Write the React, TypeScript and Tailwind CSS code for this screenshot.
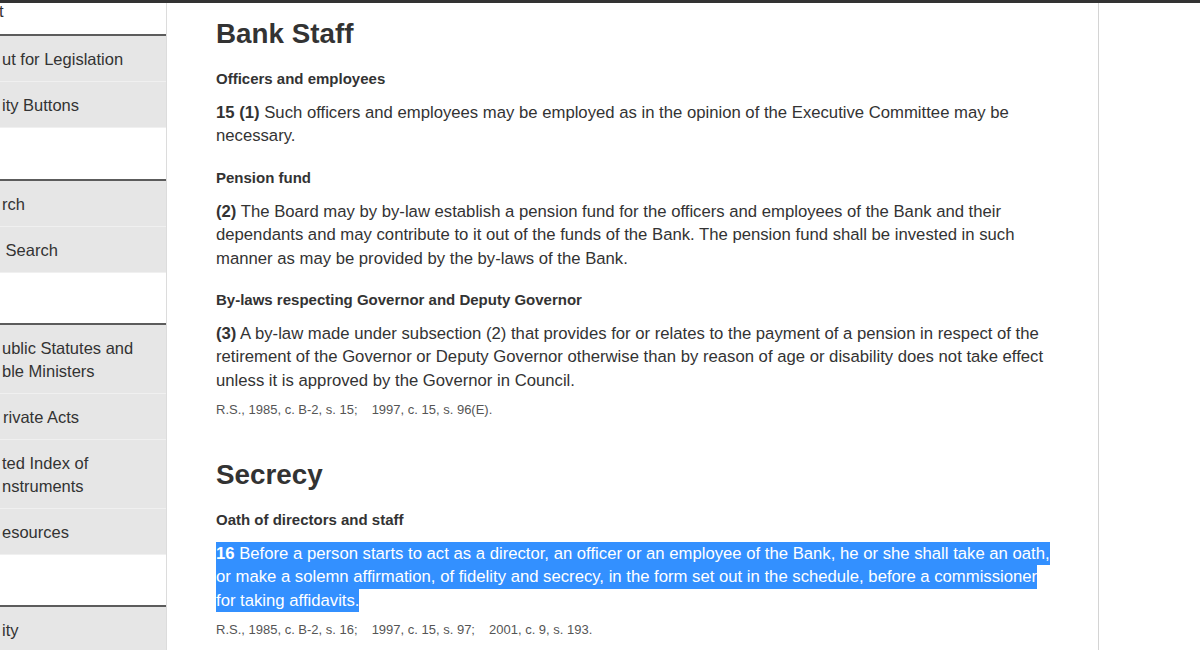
import React from "react";

type SideItem = { lines: string[]; pad?: string };

const groups: SideItem[][] = [
  [
    { lines: ["ut for Legislation"] },
    { lines: ["ity Buttons"] },
  ],
  [
    { lines: ["rch"] },
    { lines: ["\u00a0Search"], pad: "pl-[1px]" },
  ],
  [
    { lines: ["ublic Statutes and", "ble Ministers"] },
    { lines: ["rivate Acts"], pad: "pl-[3px]" },
    { lines: ["ted Index of", "nstruments"] },
    { lines: ["esources"] },
  ],
  [{ lines: ["ity"] }],
];

const gaps = ["h-[51px]", "h-[50px]", "h-[50px]"];

function Group({ items }: { items: SideItem[] }) {
  return (
    <div className="border-t-2 border-[#5c5c5c]">
      {items.map((it, i) => (
        <div
          key={i}
          className={`bg-[#e6e6e6] pt-[12px] pb-[10px] border-b border-[#f0f0f0] whitespace-nowrap ${it.pad ?? "pl-[2px]"}`}
        >
          {it.lines.map((l, j) => (
            <div key={j}>{l}</div>
          ))}
        </div>
      ))}
    </div>
  );
}

function Sidebar() {
  return (
    <aside className="w-[167px] shrink-0 border-r border-[#dcdcdc] overflow-hidden text-[16.5px] leading-[23px] text-[#333]">
      <div className="h-[31px] overflow-hidden">
        <div className="-mt-[3px] -ml-[1px]">t</div>
      </div>
      {groups.map((g, i) => (
        <React.Fragment key={i}>
          <Group items={g} />
          {i < gaps.length && <div className={gaps[i]} />}
        </React.Fragment>
      ))}
    </aside>
  );
}

function H2({ children, first }: { children: React.ReactNode; first?: boolean }) {
  return (
    <h2
      className={`${first ? "mt-[15.4px]" : "mt-[40px]"} text-[27.8px] leading-[32px] font-bold text-[#333]`}
    >
      {children}
    </h2>
  );
}

function H3({ children, afterHeading }: { children: React.ReactNode; afterHeading?: boolean }) {
  return (
    <h3
      className={`${afterHeading ? "mt-[17.5px]" : "mt-[18.6px]"} text-[15px] leading-[21px] font-bold text-[#333]`}
    >
      {children}
    </h3>
  );
}

function P({ children }: { children: React.ReactNode }) {
  return <p className="mt-[12.1px] text-[16.7px] leading-[23.5px] text-[#333]">{children}</p>;
}

function Note({ parts }: { parts: string[] }) {
  return (
    <p className="mt-[9px] text-[13px] leading-[18px] text-[#555]">
      {parts.map((p, i) => (
        <span key={i} className={i > 0 ? "ml-[14px]" : ""}>
          {p}
        </span>
      ))}
    </p>
  );
}

export default function App() {
  return (
    <div className="h-[650px] w-[1200px] overflow-hidden bg-white font-['Liberation_Sans',Arial,sans-serif]">
      <div className="h-[3px] bg-[#333]" />
      <div className="flex h-[647px]">
        <Sidebar />
        <main className="w-[932px] shrink-0 border-r border-[#d4d4d4] pl-[49px] pr-[41px]">
          <H2 first>Bank Staff</H2>
          <H3 afterHeading>Officers and employees</H3>
          <P>
            <strong>15 (1)</strong> Such officers and employees may be employed as in the opinion of the
            Executive Committee may be necessary.
          </P>
          <H3>Pension fund</H3>
          <P>
            <strong>(2)</strong> The Board may by by-law establish a pension fund for the officers and
            employees of the Bank and their dependants and may contribute to it out of the funds of the Bank.
            The pension fund shall be invested in such manner as may be provided by the by-laws of the Bank.
          </P>
          <H3>By-laws respecting Governor and Deputy Governor</H3>
          <P>
            <strong>(3)</strong> A by-law made under subsection (2) that provides for or relates to the
            payment of a pension in respect of the retirement of the Governor or Deputy Governor otherwise
            than by reason of age or disability does not take effect unless it is approved by the Governor in
            Council.
          </P>
          <Note parts={["R.S., 1985, c. B-2, s. 15;", "1997, c. 15, s. 96(E)."]} />

          <H2>Secrecy</H2>
          <H3 afterHeading>Oath of directors and staff</H3>
          <P>
            <span className="bg-[#3390ff] text-white py-[2.4px] [box-decoration-break:clone]">
              <strong>16</strong> Before a person starts to act as a director, an officer or an employee of
              the Bank, he or she shall take an oath, or make a solemn affirmation, of fidelity and secrecy, in
              the form set out in the schedule, before a commissioner for taking affidavits.
            </span>
          </P>
          <Note parts={["R.S., 1985, c. B-2, s. 16;", "1997, c. 15, s. 97;", "2001, c. 9, s. 193."]} />
        </main>
        <div className="flex-1" />
      </div>
    </div>
  );
}
